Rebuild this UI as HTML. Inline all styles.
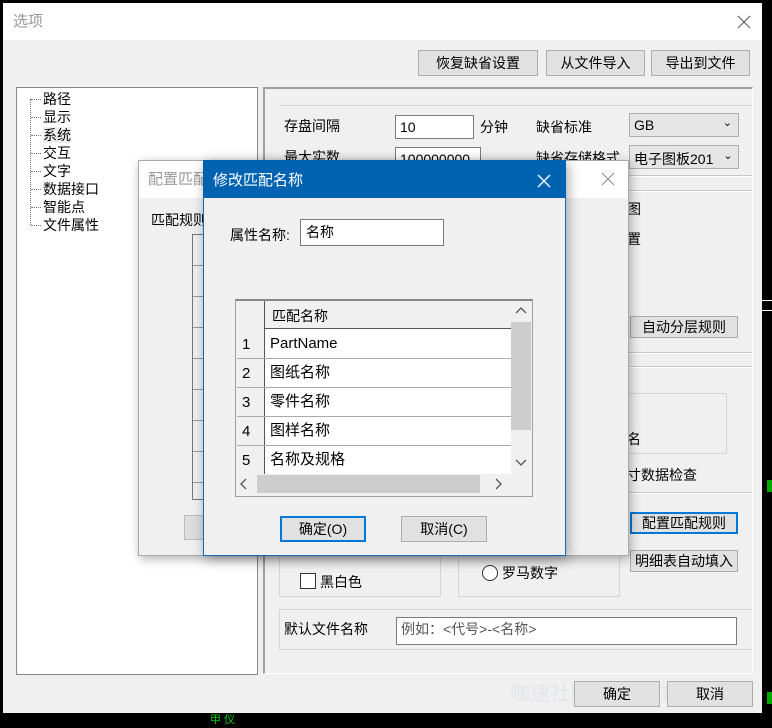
<!DOCTYPE html>
<html><head><meta charset="utf-8"><style>
*{box-sizing:border-box;margin:0;padding:0}
body{width:772px;height:723px;background:#000;position:relative;overflow:hidden;font-family:"Liberation Sans","Noto Sans CJK SC",sans-serif;font-size:14px;color:#000}
.a{position:absolute}
.t{position:absolute;white-space:nowrap;line-height:16px}
.btn{position:absolute;background:#e1e1e1;border:1px solid #adadad;text-align:center;font-size:14px}
.inp{position:absolute;background:#fff;border:1px solid #7a7a7a}
.hl{position:absolute;height:1px;background:#d5d5d5}
.sep{position:absolute;height:2px;border-top:1px solid #c8c8c8;border-bottom:1px solid #fff}
.dh{position:absolute;left:31px;width:10px;height:1px;border-top:1px dotted #777}
</style></head><body>
<div class="a" style="left:3px;top:3px;width:759px;height:710px;background:#f0f0f0"></div>
<div class="a" style="left:3px;top:3px;width:759px;height:37px;background:#fff"></div>
<div class="t" style="left:13px;top:14px;color:#999;font-size:15px">选项</div>
<svg class="a" style="left:737px;top:15px" width="14" height="14"><path d="M1 1L13 13M13 1L1 13" stroke="#555" stroke-width="1"/></svg>
<div class="a" style="left:762px;top:300px;width:10px;height:1px;background:#fff"></div>
<div class="a" style="left:762px;top:310px;width:10px;height:1px;background:#fff"></div>
<div class="a" style="left:767px;top:480px;width:5px;height:12px;background:#0a0"></div>
<div class="a" style="left:767px;top:692px;width:5px;height:12px;background:#0a0"></div>
<div class="t" style="left:210px;top:712px;color:#0c0;font-size:11px">甲 仪</div>

<div class="btn" style="left:418px;top:50px;width:120px;height:26px;line-height:24px">恢复缺省设置</div>
<div class="btn" style="left:546px;top:50px;width:99px;height:26px;line-height:24px">从文件导入</div>
<div class="btn" style="left:651px;top:50px;width:99px;height:26px;line-height:24px">导出到文件</div>

<div class="a" style="left:16px;top:87px;width:242px;height:588px;background:#fff;border:1px solid #828790"></div>
<div class="a" style="left:30px;top:99px;width:1px;height:126px;border-left:1px dotted #777"></div>
<div class="dh" style="top:99px"></div><div class="dh" style="top:117px"></div><div class="dh" style="top:135px"></div><div class="dh" style="top:153px"></div><div class="dh" style="top:171px"></div><div class="dh" style="top:189px"></div><div class="dh" style="top:207px"></div><div class="dh" style="top:225px"></div>
<div class="t" style="left:43px;top:90px;line-height:18px;font-size:14px">路径<br>显示<br><span style="background:#f0f0f0">系统</span><br>交互<br>文字<br>数据接口<br>智能点<br>文件属性</div>

<div class="a" style="left:263px;top:87px;width:490px;height:587px;border-left:2px solid #a0a0a0;border-top:2px solid #a0a0a0;border-right:1px solid #fff;border-bottom:1px solid #fff"></div>
<div class="a" style="left:279px;top:105px;width:473px;height:1px;background:#d5d5d5"></div>
<div class="t" style="left:284px;top:118px">存盘间隔</div>
<div class="inp" style="left:395px;top:115px;width:79px;height:24px;padding:3px 4px">10</div>
<div class="t" style="left:480px;top:119px">分钟</div>
<div class="t" style="left:536px;top:119px">缺省标准</div>
<div class="a" style="left:629px;top:113px;width:110px;height:24px;background:#e5e5e5;border:1px solid #adadad;padding:3px 4px">GB<span style="position:absolute;right:6px;top:2px;font-size:11px">&#8964;</span></div>
<div class="t" style="left:284px;top:149px">最大实数</div>
<div class="inp" style="left:395px;top:147px;width:86px;height:24px;padding:3px 4px">100000000</div>
<div class="t" style="left:536px;top:150px">缺省存储格式</div>
<div class="a" style="left:629px;top:145px;width:110px;height:24px;background:#e5e5e5;border:1px solid #adadad;padding:3px 4px;overflow:hidden;white-space:nowrap">电子图板201<span style="position:absolute;right:0;top:0;width:20px;height:22px;background:#e5e5e5;font-size:11px;text-align:center;line-height:20px">&#8964;</span></div>
<div class="sep" style="left:566px;top:175px;width:186px"></div>
<div class="sep" style="left:566px;top:190px;width:186px"></div>
<div class="t" style="left:627px;top:201px">图</div>
<div class="t" style="left:627px;top:231px">置</div>
<div class="btn" style="left:630px;top:316px;width:108px;height:22px;line-height:20px">自动分层规则</div>
<div class="sep" style="left:566px;top:352px;width:186px"></div>
<div class="sep" style="left:566px;top:366px;width:186px"></div>
<div class="a" style="left:566px;top:393px;width:161px;height:61px;border:1px solid #d5d5d5"></div>
<div class="t" style="left:627px;top:431px">名</div>
<div class="t" style="left:627px;top:467px">寸数据检查</div>
<div class="sep" style="left:566px;top:492px;width:186px"></div>
<div class="btn" style="left:630px;top:512px;width:108px;height:22px;line-height:18px;border:2px solid #0078d7">配置匹配规则</div>
<div class="btn" style="left:630px;top:550px;width:108px;height:22px;line-height:20px">明细表自动填入</div>
<div class="a" style="left:279px;top:520px;width:162px;height:77px;border:1px solid #d5d5d5"></div>
<div class="a" style="left:458px;top:520px;width:162px;height:77px;border:1px solid #d5d5d5"></div>
<div class="a" style="left:300px;top:535px;width:16px;height:16px;border:1px solid #333;border-radius:50%;background:#fff"></div>
<div class="t" style="left:320px;top:537px">选择案自动充满</div>
<div class="a" style="left:300px;top:573px;width:16px;height:16px;border:1px solid #333;background:#fff"></div>
<div class="t" style="left:320px;top:574px">黑白色</div>
<div class="a" style="left:482px;top:565px;width:16px;height:16px;border:1px solid #333;border-radius:50%;background:#fff"></div>
<div class="t" style="left:502px;top:565px">罗马数字</div>
<div class="a" style="left:279px;top:609px;width:473px;height:41px;border:1px solid #d5d5d5;border-right:none"></div>
<div class="t" style="left:284px;top:621px">默认文件名称</div>
<div class="inp" style="left:396px;top:617px;width:341px;height:28px;padding:3px 4px;color:#555;line-height:16px">例如：&lt;代号&gt;-&lt;名称&gt;</div>
<div class="t" style="left:510px;top:683px;color:#e2e4ec;font-size:20px;line-height:22px">咖速社区 | CAXA数码大方</div>
<div class="btn" style="left:574px;top:681px;width:86px;height:26px;line-height:24px">确定</div>
<div class="btn" style="left:667px;top:681px;width:86px;height:26px;line-height:24px">取消</div>

<div class="a" style="left:138px;top:160px;width:491px;height:396px;background:#f0f0f0;border:1px solid #aaa;box-shadow:2px 3px 10px rgba(0,0,0,.3)"></div>
<div class="a" style="left:139px;top:161px;width:489px;height:37px;background:#fff"></div>
<div class="t" style="left:148px;top:172px;color:#999;font-size:15px">配置匹配规则</div>
<svg class="a" style="left:601px;top:172px" width="14" height="14"><path d="M1 1L13 13M13 1L1 13" stroke="#888" stroke-width="1"/></svg>
<div class="t" style="left:151px;top:212px">匹配规则</div>
<div class="a" style="left:192px;top:234px;width:30px;height:266px;background:#f0f0f0;border:1px solid #777"></div>
<div class="hl" style="left:193px;top:265px;width:29px;background:#999"></div>
<div class="hl" style="left:193px;top:296px;width:29px;background:#999"></div>
<div class="hl" style="left:193px;top:327px;width:29px;background:#999"></div>
<div class="hl" style="left:193px;top:358px;width:29px;background:#999"></div>
<div class="hl" style="left:193px;top:389px;width:29px;background:#999"></div>
<div class="hl" style="left:193px;top:420px;width:29px;background:#999"></div>
<div class="hl" style="left:193px;top:451px;width:29px;background:#999"></div>
<div class="hl" style="left:193px;top:482px;width:29px;background:#999"></div>
<div class="a" style="left:184px;top:515px;width:30px;height:25px;background:#ddd;border:1px solid #bbb"></div>

<div class="a" style="left:203px;top:160px;width:363px;height:396px;background:#f0f0f0;border:1px solid #1569b5;box-shadow:2px 3px 12px rgba(0,0,0,.35)"></div>
<div class="a" style="left:203px;top:160px;width:363px;height:38px;background:#0063b1"></div>
<div class="t" style="left:213px;top:173px;color:#fff;font-size:15px">修改匹配名称</div>
<svg class="a" style="left:537px;top:174px" width="14" height="14"><path d="M1 1L13 13M13 1L1 13" stroke="#fff" stroke-width="1.3"/></svg>
<div class="t" style="left:230px;top:227px">属性名称:</div>
<div class="inp" style="left:300px;top:219px;width:144px;height:27px;padding:2px 5px">名称</div>
<div class="a" style="left:235px;top:299px;width:298px;height:198px;background:#f0f0f0;border:1px solid #a0a0a0;border-top:2px solid #888"></div>
<div class="a" style="left:237px;top:301px;width:274px;height:173px;background:#fff"></div>
<div class="a" style="left:237px;top:301px;width:274px;height:28px;background:#f0f0f0;border-bottom:1px solid #555"></div>
<div class="a" style="left:237px;top:301px;width:28px;height:173px;background:#f0f0f0;border-right:1px solid #555"></div>
<div class="t" style="left:272px;top:308px">匹配名称</div>
<div class="hl" style="left:237px;top:358px;width:274px;background:#aaa"></div>
<div class="hl" style="left:237px;top:387px;width:274px;background:#aaa"></div>
<div class="hl" style="left:237px;top:416px;width:274px;background:#aaa"></div>
<div class="hl" style="left:237px;top:445px;width:274px;background:#aaa"></div>
<div class="t" style="left:242px;top:337px;font-size:15px">1</div>
<div class="t" style="left:270px;top:336px;font-size:15px">PartName</div>
<div class="t" style="left:242px;top:366px;font-size:15px">2</div>
<div class="t" style="left:270px;top:365px;font-size:15px">图纸名称</div>
<div class="t" style="left:242px;top:395px;font-size:15px">3</div>
<div class="t" style="left:270px;top:394px;font-size:15px">零件名称</div>
<div class="t" style="left:242px;top:424px;font-size:15px">4</div>
<div class="t" style="left:270px;top:423px;font-size:15px">图样名称</div>
<div class="t" style="left:242px;top:453px;font-size:15px">5</div>
<div class="t" style="left:270px;top:452px;font-size:15px">名称及规格</div>
<div class="a" style="left:511px;top:301px;width:20px;height:173px;background:#f0f0f0"></div>
<div class="a" style="left:511px;top:322px;width:20px;height:108px;background:#cdcdcd"></div>
<svg class="a" style="left:515px;top:307px" width="12" height="8"><path d="M1 6L6 1L11 6" stroke="#555" fill="none" stroke-width="1.3"/></svg>
<svg class="a" style="left:515px;top:458px" width="12" height="8"><path d="M1 2L6 7L11 2" stroke="#555" fill="none" stroke-width="1.3"/></svg>
<div class="a" style="left:237px;top:474px;width:294px;height:20px;background:#f0f0f0"></div>
<div class="a" style="left:257px;top:475px;width:223px;height:18px;background:#cdcdcd"></div>
<svg class="a" style="left:240px;top:478px" width="8" height="12"><path d="M6 1L1 6L6 11" stroke="#555" fill="none" stroke-width="1.3"/></svg>
<svg class="a" style="left:494px;top:478px" width="8" height="12"><path d="M2 1L7 6L2 11" stroke="#555" fill="none" stroke-width="1.3"/></svg>
<div class="btn" style="left:280px;top:516px;width:86px;height:26px;line-height:22px;border:2px solid #0078d7">确定(O)</div>
<div class="btn" style="left:401px;top:516px;width:86px;height:26px;line-height:24px">取消(C)</div>
</body></html>
